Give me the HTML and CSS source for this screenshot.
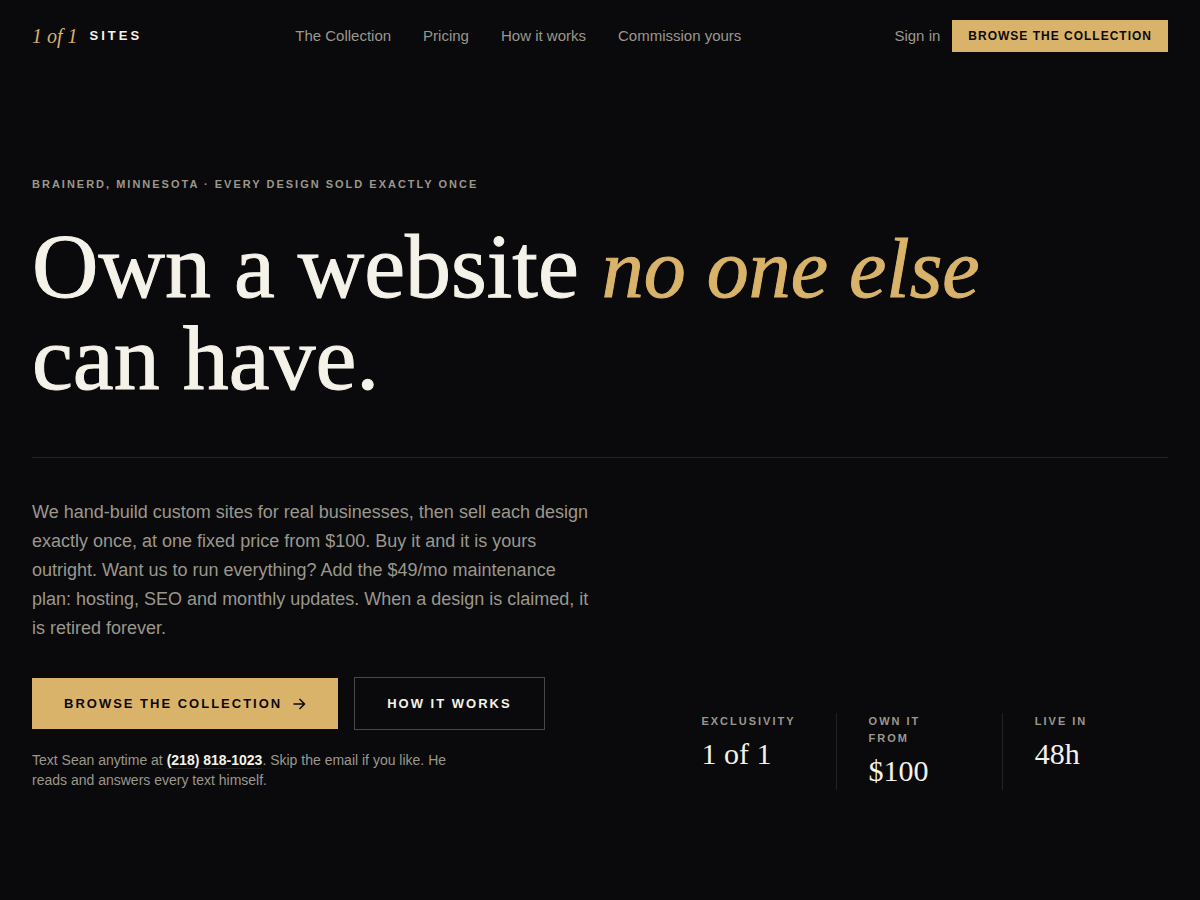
FILE: index.html
```html
<!DOCTYPE html>
<html lang="en">
	<head>
		<meta charset="utf-8" />
		<meta name="viewport" content="width=device-width, initial-scale=1" />
		<title>1 of 1 Sites</title>
		<link rel="stylesheet" href="styles.css">
	</head>
	<body>
		<header class="header">
			<a class="logo" href="#"><em>1 of 1</em><span>Sites</span></a>
			<nav class="nav">
				<a href="#">The Collection</a>
				<a href="#">Pricing</a>
				<a href="#">How it works</a>
				<a href="#">Commission yours</a>
			</nav>
			<div class="account">
				<a class="sign-in" href="#">Sign in</a>
				<a class="btn btn-small" href="#">Browse the collection</a>
			</div>
		</header>

		<main class="hero">
			<p class="eyebrow">Brainerd, Minnesota · Every design sold exactly once</p>
			<h1>Own a website <em>no one else</em> can have.</h1>

			<div class="details">
				<div class="intro">
					<p class="lead">We hand-build custom sites for real businesses, then sell each design exactly once, at one fixed price from $100. Buy it and it is yours outright. Want us to run everything? Add the $49/mo maintenance plan: hosting, SEO and monthly updates. When a design is claimed, it is retired forever.</p>
					<div class="actions">
						<a class="btn" href="#">
							Browse the collection
							<svg class="arrow" viewBox="0 0 14 14" aria-hidden="true"><path d="M1.5 7h11M7.5 2l5 5-5 5" /></svg>
						</a>
						<a class="btn btn-outline" href="#">How it works</a>
					</div>
					<p class="note">Text Sean anytime at <a href="tel:+12188181023">(218) 818-1023</a>. Skip the email if you like. He reads and answers every text himself.</p>
				</div>

				<dl class="stats">
					<div class="stat">
						<dt>Exclusivity</dt>
						<dd>1 of 1</dd>
					</div>
					<div class="stat">
						<dt>Own it<br>from</dt>
						<dd>$100</dd>
					</div>
					<div class="stat">
						<dt>Live in</dt>
						<dd>48h</dd>
					</div>
				</dl>
			</div>
		</main>
	</body>
</html>
```

FILE: styles.css
```css
*{
	box-sizing: border-box;
}

body{
	margin: 0;
	background-color: #0a0a0c;
	color: #f5f2e9;
	font-family: "Liberation Sans", Arial, sans-serif;
	font-size: 14px;
	line-height: 20px;
}

a{
	color: inherit;
	text-decoration: none;
}

h1, p, dl, dd{
	margin: 0;
}

/* header */
.header{
	display: flex;
	align-items: center;
	justify-content: space-between;
	padding: 20px 32px;
}

.logo{
	display: flex;
	align-items: center;
	gap: 12px;
}

.logo em{
	color: #d9b36a;
	font-family: "Liberation Serif", "Times New Roman", serif;
	font-size: 20px;
}

.logo span{
	font-size: 13px;
	font-weight: bold;
	letter-spacing: 3px;
	text-transform: uppercase;
}

.nav{
	display: flex;
	gap: 32px;
	color: #9b978c;
	font-size: 15px;
}

.account{
	display: flex;
	align-items: center;
	gap: 12px;
}

.sign-in{
	color: #9b978c;
	font-size: 15px;
}

/* buttons */
.btn{
	display: inline-flex;
	align-items: center;
	gap: 10px;
	padding: 16px 32px;
	background-color: #d9b36a;
	color: #0a0a0c;
	font-size: 13px;
	font-weight: bold;
	line-height: 19px;
	letter-spacing: 2px;
	text-transform: uppercase;
}

.btn-small{
	padding: 8px 16px;
	font-size: 12px;
	line-height: 16px;
	letter-spacing: 1px;
}

.btn-outline{
	border: 1px solid #47474a;
	background-color: transparent;
	color: #f5f2e9;
}

.arrow{
	width: 14px;
	height: 14px;
	fill: none;
	stroke: currentColor;
	stroke-width: 1.5;
}

/* hero */
.hero{
	padding: 104px 32px;
}

.eyebrow{
	color: #9b978c;
	font-size: 11px;
	font-weight: bold;
	line-height: 16px;
	letter-spacing: 2px;
	text-transform: uppercase;
}

h1{
	max-width: 1050px;
	margin-top: 28px;
	font-family: "Liberation Serif", "Times New Roman", serif;
	font-size: 92px;
	font-weight: normal;
	line-height: 92px;
	-webkit-text-stroke: 1px currentColor;
}

h1 em{
	color: #d9b36a;
	font-size: 84px;
	line-height: 72px;
}

.details{
	display: grid;
	grid-template-columns: 1.15fr 1fr;
	gap: 64px;
	align-items: end;
	margin-top: 53px;
	padding-top: 40px;
	border-top: 1px solid #222224;
}

.lead{
	max-width: 560px;
	color: #9b978c;
	font-size: 18px;
	line-height: 29px;
}

.actions{
	display: flex;
	flex-wrap: wrap;
	align-items: center;
	gap: 16px;
	margin-top: 34px;
}

.note{
	max-width: 448px;
	margin-top: 20px;
	color: #9b978c;
}

.note a{
	border-bottom: 1px solid #222224;
	color: #f5f2e9;
	font-weight: bold;
}

/* stats */
.stats{
	display: grid;
	grid-template-columns: repeat(3, 1fr);
}

.stat{
	padding: 0 32px;
}

.stat + .stat{
	border-left: 1px solid #222224;
}

.stat dt{
	color: #9b978c;
	font-size: 11px;
	font-weight: bold;
	line-height: 17px;
	letter-spacing: 2px;
	text-transform: uppercase;
}

.stat dd{
	margin-top: 4px;
	font-family: "Liberation Serif", "Times New Roman", serif;
	font-size: 30px;
	line-height: 39px;
}
```
